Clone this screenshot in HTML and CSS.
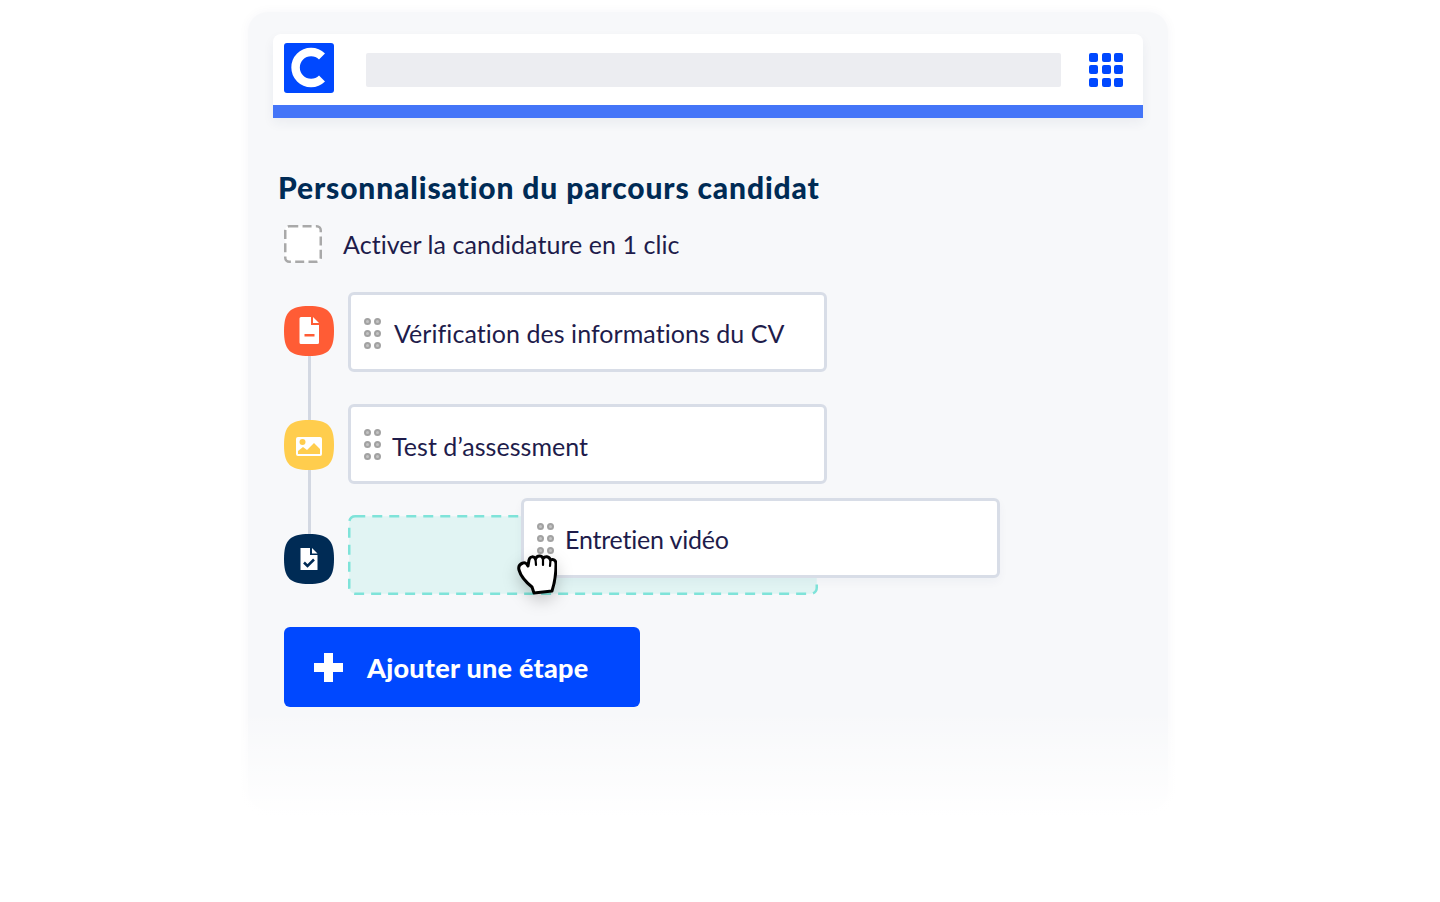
FILE: index.html
```html
<!DOCTYPE html>
<html lang="fr">
<head>
    <meta charset="UTF-8">
    <meta name="viewport" content="width=device-width, initial-scale=1.0">
    <title>Personnalisation du parcours candidat</title>
    <link rel="stylesheet" href="styles.css">
</head>
<body>
    <div class="panel">
        <div class="topbar">
            <div class="topbar-row">
                <svg class="logo" viewBox="0 0 50 50">
                    <rect width="50" height="50" rx="3" fill="#0048ff"/>
                    <path d="M38 13.5A15.5 15.5 0 1 0 38 35.5" fill="none" stroke="#fff" stroke-width="8.5"/>
                </svg>
                <div class="search"></div>
                <div class="apps">
                    <span></span><span></span><span></span>
                    <span></span><span></span><span></span>
                    <span></span><span></span><span></span>
                </div>
            </div>
            <div class="topbar-line"></div>
        </div>

        <div class="content">
            <h1 class="title">Personnalisation du parcours candidat</h1>
            <div class="option">
                <svg class="checkbox" viewBox="0 0 38 38">
                    <rect x="1.250" y="1.250" width="35.500" height="35.500" rx="4" fill="#fff" stroke="#a9a9a9" stroke-width="2.500" stroke-dasharray="9 4.300"/>
                </svg>
                <span class="option-label">Activer la candidature en 1 clic</span>
            </div>

            <div class="steps">
                <div class="step">
                    <div class="step-icon step-icon-first">
                        <svg viewBox="0 0 50 50">
                            <path fill="#ff5c35" d="M25 0C44 0 50 6 50 25C50 44 44 50 25 50C6 50 0 44 0 25C0 6 6 0 25 0Z"/>
                            <path fill="#fff" d="M17 11H27V19H35V36.500A1.500 1.500 0 0 1 33.500 38H17A1.500 1.500 0 0 1 15.500 36.500V12.500A1.500 1.500 0 0 1 17 11Z"/>
                            <path fill="#fff" d="M29 11L35 17H29Z"/>
                            <rect x="20.500" y="28" width="10" height="2.500" fill="#ff5c35"/>
                        </svg>
                    </div>
                    <div class="card">
                        <div class="grip"><i></i><i></i><i></i><i></i><i></i><i></i></div>
                        <span class="card-label">Vérification des informations du CV</span>
                    </div>
                </div>

                <div class="step">
                    <div class="step-icon step-icon-second">
                        <svg viewBox="0 0 50 50">
                            <path fill="#ffcd4d" d="M25 0C44 0 50 6 50 25C50 44 44 50 25 50C6 50 0 44 0 25C0 6 6 0 25 0Z"/>
                            <rect x="12" y="17" width="26" height="19" rx="2" fill="#fff"/>
                            <circle cx="18.500" cy="22" r="3" fill="#ffcd4d"/>
                            <path fill="#ffcd4d" d="M14 34V31L19 27L23 30L30 23L36 29V34Z"/>
                        </svg>
                    </div>
                    <div class="card card-second">
                        <div class="grip"><i></i><i></i><i></i><i></i><i></i><i></i></div>
                        <span class="card-label">Test d’assessment</span>
                    </div>
                </div>

                <div class="step">
                    <div class="step-icon step-icon-third">
                        <svg viewBox="0 0 50 50">
                            <path fill="#002b55" d="M25 0C44 0 50 6 50 25C50 44 44 50 25 50C6 50 0 44 0 25C0 6 6 0 25 0Z"/>
                            <path fill="#fff" d="M16.500 14H26V21H33.500V36H16.500Z"/>
                            <path fill="#fff" d="M28 14L33.500 19.500H28Z"/>
                            <path fill="none" stroke="#002b55" stroke-width="2.500" d="M20 28.500L23.500 32L30 25.500"/>
                        </svg>
                    </div>
                    <svg class="dropzone" viewBox="0 0 470 80">
                        <rect x="1.250" y="1.250" width="467.500" height="77.500" rx="6" fill="#e1f4f3" stroke="#7fe3d9" stroke-width="2.500" stroke-dasharray="10 7"/>
                    </svg>
                </div>

                <div class="card card-dragged">
                    <div class="grip"><i></i><i></i><i></i><i></i><i></i><i></i></div>
                    <span class="card-label">Entretien vidéo</span>
                </div>
                <svg class="hand" viewBox="0 0 40 43">
                    <path fill="#fff" stroke="#000" stroke-width="3" stroke-linejoin="round" d="M6 11C8 10 10 12 11 14L12 8C13 4 17 4 18.500 7C20 3 25 3 26 6.500C28 4 32 4 33.500 8C36 6.500 39 8 39 12C39 20 38 30 35 39L17 41L15 35C10 31 4 25 2 18C1 14 3 12 6 11Z"/>
                    <path fill="none" stroke="#000" stroke-width="2.200" stroke-linecap="round" d="M18.500 7L19 13M26 6.500L26 13M33.500 8L33 14"/>
                </svg>
            </div>

            <div class="add-step">
                <svg class="add-icon" viewBox="0 0 29 29">
                    <path fill="#fff" d="M10 0H19V10H29V19H19V29H10V19H0V10H10Z"/>
                </svg>
                <span>Ajouter une étape</span>
            </div>
        </div>
    </div>
</body>
</html>
```

FILE: styles.css
```css
body {
    margin: 0;
    height: 902px;
    overflow: hidden;
    background-color: white;
    font-family: "Lato", "Liberation Sans", sans-serif;
}
.panel {
    position: relative;
    box-sizing: border-box;
    width: 920px;
    height: 798px;
    margin: 12px 0 0 248px;
    padding: 22px 25px 0;
    background-color: #f7f8fa;
    border-radius: 20px;
    box-shadow: 0 0 12px rgba(30, 50, 90, 0.04);
}
/* fades the bottom of the panel into the page */
.panel::after {
    content: "";
    position: absolute;
    left: -24px;
    right: -24px;
    top: 698px;
    bottom: -24px;
    background: linear-gradient(rgba(255, 255, 255, 0), white 88%);
}
.topbar {
    background-color: white;
    border-radius: 8px 8px 0 0;
    box-shadow: 0 5px 12px rgba(30, 50, 90, 0.06);
}
.topbar-row {
    display: flex;
    align-items: center;
    height: 71px;
    padding: 0 20px 0 11px;
}
.logo {
    width: 50px;
    height: 50px;
    margin-top: -3px;
}
.search {
    flex: 1;
    height: 34px;
    margin: 0 28px 0 32px;
    background-color: #ecedf1;
    border-radius: 2px;
}
.apps {
    display: grid;
    grid-template-columns: repeat(3, 9px);
    grid-auto-rows: 9px;
    gap: 3.5px;
}
.apps span {
    background-color: #0048ff;
    border-radius: 2px;
}
.topbar-line {
    height: 13px;
    background-color: #4475f8;
}
.content {
    position: relative;
    z-index: 1;
    padding: 51px 0 0 11px;
}
.title {
    margin: 0 0 0 -6px;
    font-size: 30px;
    line-height: 36px;
    font-weight: 900;
    letter-spacing: 0.85px;
    color: #002b55;
}
.option {
    display: flex;
    align-items: center;
    gap: 21px;
    margin-top: 20px;
}
.checkbox {
    flex: none;
    width: 38px;
    height: 38px;
}
.option-label, .card-label {
    font-size: 25px;
    letter-spacing: 0.05px;
    color: #1e1c4b;
}
.steps {
    position: relative;
    display: flex;
    flex-direction: column;
    gap: 31.5px;
    margin-top: 29px;
}
/* line between the step icons */
.steps::before {
    content: "";
    position: absolute;
    left: 24px;
    top: 50px;
    width: 2.5px;
    height: 200px;
    background-color: #d3d8e2;
}
.step {
    position: relative;
    display: flex;
    align-items: flex-start;
    gap: 14px;
}
.step-icon {
    flex: none;
    width: 50px;
    height: 50px;
}
.step-icon svg {
    display: block;
}
.step-icon-first { margin-top: 14px; }
.step-icon-second { margin-top: 16px; }
.step-icon-third { margin-top: 18.5px; }
.card {
    box-sizing: border-box;
    display: flex;
    align-items: center;
    gap: 13px;
    width: 479px;
    height: 80px;
    padding: 2px 0 0 13px;
    background-color: white;
    border: 3px solid #d8dde7;
    border-radius: 6px;
}
.card-second {
    gap: 11px;
}
.card-second .card-label {
    margin-top: 2px;
}
.card-dragged {
    position: absolute;
    left: 237px;
    top: 206px;
    padding-top: 1px;
    gap: 11px;
    box-shadow: 0 4px 10px rgba(30, 50, 90, 0.04);
}
.card-dragged .card-label {
    letter-spacing: -0.2px;
}
.grip {
    display: grid;
    grid-template-columns: repeat(2, 7px);
    grid-auto-rows: 7px;
    gap: 5px 3px;
}
.grip i {
    box-sizing: border-box;
    background-color: #c4c4c4;
    border: 2px solid #a2a2a2;
    border-radius: 50%;
}
.dropzone {
    width: 470px;
    height: 80px;
}
.hand {
    position: absolute;
    left: 233px;
    top: 260px;
    width: 40px;
    height: 43px;
    filter: drop-shadow(0 6px 8px rgba(0, 0, 0, 0.2));
}
.add-step {
    box-sizing: border-box;
    display: flex;
    align-items: center;
    gap: 24px;
    width: 356px;
    height: 80px;
    margin-top: 32px;
    padding-left: 30px;
    background-color: #0048ff;
    border-radius: 6px;
    font-size: 27px;
    font-weight: 900;
    letter-spacing: 0.25px;
    color: white;
}
.add-icon {
    width: 29px;
    height: 29px;
}
```
